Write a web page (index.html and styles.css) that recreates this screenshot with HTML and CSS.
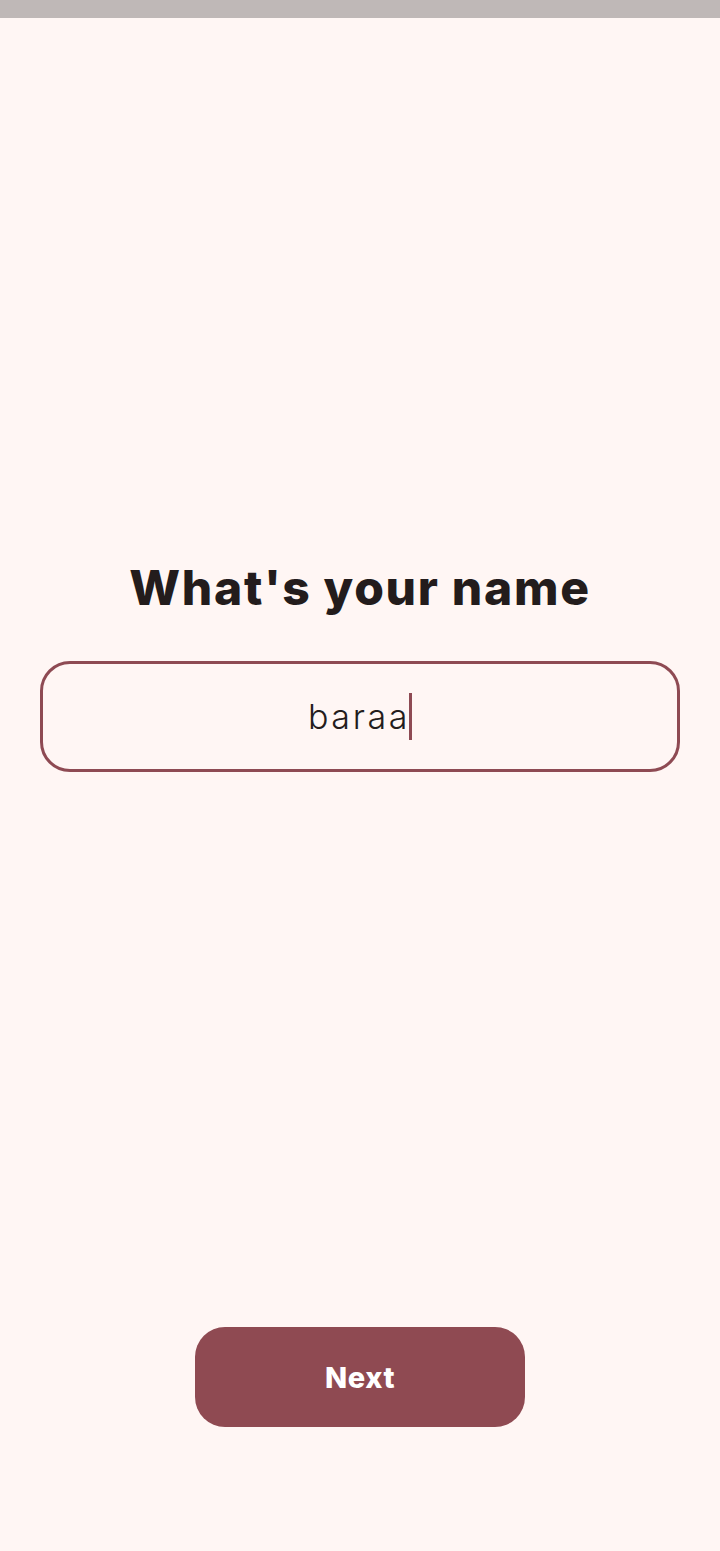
FILE: index.html
```html
<!DOCTYPE html>
<html>
<head>
<meta charset="utf-8">
<link rel="stylesheet" href="styles.css">
</head>
<body>
<div class="status-bar"></div>
<main class="screen">
  <h1 class="title">What's your name</h1>
  <div class="field">
    <span class="field-text">baraa</span><span class="caret"></span>
  </div>
  <div class="spacer"></div>
  <button class="next-btn">Next</button>
</main>
</body>
</html>
```
FILE: styles.css
```css
html, body {
  margin: 0;
  padding: 0;
  background: #fff6f4;
}
body {
  width: 720px;
  height: 1551px;
  overflow: hidden;
  font-family: "Inter", "Open Sans", sans-serif;
}
.status-bar {
  height: 18px;
  background: #bfb8b7;
}
.screen {
  display: flex;
  flex-direction: column;
  align-items: center;
  height: 1533px;
  box-sizing: border-box;
  padding: 540px 40px 124px;
}
.title {
  margin: 0;
  height: 60px;
  line-height: 60px;
  font-size: 48px;
  font-weight: 800;
  color: #231c1c;
  letter-spacing: 1.7px;
}
.field {
  margin-top: 43px;
  width: 640px;
  height: 111px;
  box-sizing: border-box;
  border: 3px solid #8e4a53;
  border-radius: 30px;
  display: flex;
  align-items: center;
  justify-content: center;
}
.field-text {
  font-size: 34px;
  font-weight: 300;
  color: #231c1c;
  letter-spacing: 2.6px;
}
.caret {
  display: inline-block;
  width: 3px;
  height: 47px;
  background: #8e4a53;
  margin-left: -1px;
}
.spacer {
  flex: 1;
}
.next-btn {
  width: 330px;
  height: 100px;
  border: none;
  border-radius: 30px;
  background: #8f4a52;
  color: #ffffff;
  font-family: "Inter", "Open Sans", sans-serif;
  font-size: 29px;
  font-weight: 800;
  letter-spacing: 0.6px;
}
```
